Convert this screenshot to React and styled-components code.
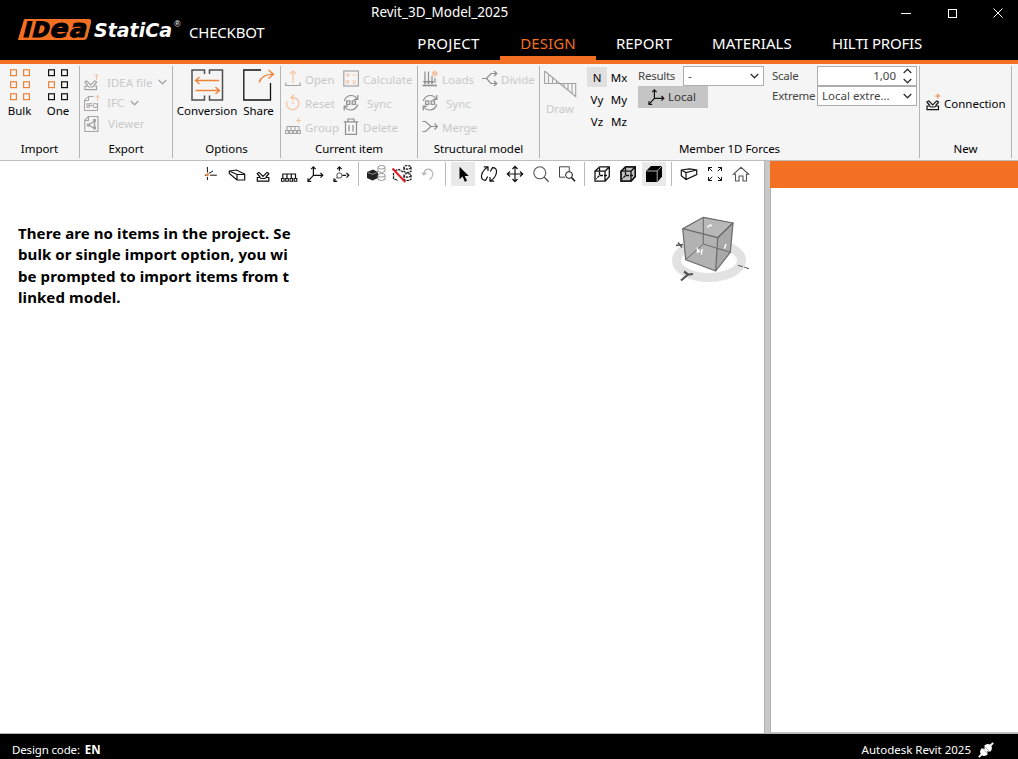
import React from "react";
import styled, { createGlobalStyle } from "styled-components";

const ORANGE = "#f36f21";
const FONT = `"Noto Sans", "Open Sans", sans-serif`;

const GlobalStyle = createGlobalStyle`
  * {
    box-sizing: border-box;
  }
  body {
    margin: 0;
    background: #fff;
    font-family: ${FONT};
    font-size: 11.5px;
    color: #000;
    overflow: hidden;
  }
  svg {
    display: block;
    flex: none;
  }
`;

const Window = styled.div`
  display: flex;
  flex-direction: column;
  width: 1018px;
  height: 759px;
  background: #fff;
`;

/* ---------- header ---------- */

const Header = styled.header`
  display: flex;
  height: 64px;
  background: #000;
  color: #fff;
  border-bottom: 4px solid ${ORANGE};
`;

const Brand = styled.div`
  display: flex;
  width: 371px;
  padding: 7px 0 0 16px;
`;

const Product = styled.span`
  margin-left: 5px;
  padding-top: 14px;
  font-size: 15px;
  line-height: 22px;
  letter-spacing: -0.2px;
`;

const HeaderMain = styled.div`
  display: flex;
  flex-direction: column;
  flex: 1;
`;

const TitleRow = styled.div`
  display: flex;
  justify-content: space-between;
  height: 26px;
`;

const Title = styled.span`
  font-size: 13.5px;
  line-height: 24px;
  letter-spacing: 0;
`;

const WindowButtons = styled.div`
  display: flex;
  margin-right: -3px;
`;

const WindowButton = styled.button`
  display: flex;
  align-items: center;
  justify-content: center;
  width: 46px;
  height: 26px;
  padding: 0;
  border: 0;
  background: none;
  color: #fff;
`;

const Tabs = styled.nav`
  display: flex;
  height: 34px;
  padding-left: 26px;
`;

const Tab = styled.a`
  width: ${({ $width }) => $width}px;
  height: 34px;
  font-size: 15px;
  line-height: 35px;
  text-align: center;
  white-space: nowrap;
  letter-spacing: ${({ $spacing }) => $spacing}px;
  color: ${({ $active }) => ($active ? ORANGE : "#fff")};
  border-bottom: ${({ $active }) => ($active ? `4px solid ${ORANGE}` : "0")};
`;

/* ---------- ribbon ---------- */

const Ribbon = styled.div`
  display: flex;
  height: 97px;
  padding-top: 2px;
  background: #f5f5f5;
  border-bottom: 1px solid #bdbdbd;
`;

const Group = styled.section`
  display: flex;
  flex-direction: column;
  width: ${({ $width }) => $width}px;
  height: 92px;
  border-right: 1px solid #b4b4b4;
`;

const GroupBody = styled.div`
  display: flex;
  height: 73px;
  padding: ${({ $pad }) => $pad || "0"};
`;

const GroupLabel = styled.div`
  height: 19px;
  line-height: 20px;
  text-align: center;
  letter-spacing: -0.05px;
`;

const BigButton = styled.button`
  display: flex;
  flex-direction: column;
  align-items: center;
  width: ${({ $width }) => $width}px;
  height: 56px;
  padding: 3px 0 0;
  border: 0;
  background: none;
  font: inherit;
  line-height: 20px;
  letter-spacing: -0.05px;
  white-space: nowrap;
  color: ${({ $off }) => ($off ? "#c9c9c9" : "#000")};
`;

const Column = styled.div`
  display: flex;
  flex-direction: column;
  width: ${({ $width }) => $width}px;
`;

const SmallButton = styled.button`
  display: flex;
  align-items: center;
  gap: ${({ $gap }) => $gap || 4}px;
  height: ${({ $height }) => $height || 24}px;
  padding: 0;
  border: 0;
  background: none;
  font: inherit;
  white-space: nowrap;
  color: ${({ $off }) => ($off ? "#c9c9c9" : "#000")};
`;

const ForceGrid = styled.div`
  display: grid;
  grid-template-columns: 20px 20px;
  grid-auto-rows: 20px;
  gap: 2px;
  width: 51px;
  padding-top: 1px;
`;

const ForceButton = styled.button`
  padding: 1px 0 0;
  border: 0;
  background: ${({ $active }) => ($active ? "#e0e0e0" : "none")};
  font: inherit;
  line-height: 20px;
  text-align: center;
  color: #000;
`;

const Field = styled.div`
  display: flex;
  align-items: center;
  height: 20px;
  line-height: 18px;
  color: #444;
`;

const FieldName = styled.label`
  width: 45px;
  padding-bottom: 1px;
  letter-spacing: -0.25px;
`;

const Box = styled.div`
  display: flex;
  align-items: center;
  justify-content: ${({ $end }) => ($end ? "flex-end" : "space-between")};
  gap: 7px;
  width: ${({ $width }) => $width}px;
  height: 20px;
  padding: 0 4px;
  background: #fff;
  border: 1px solid #adadad;
`;

const Spinner = styled.div`
  display: flex;
  flex-direction: column;
  gap: 4px;
`;

const LocalButton = styled.button`
  display: flex;
  align-items: center;
  gap: 2px;
  width: 70px;
  height: 22px;
  padding: 0 0 1px 8px;
  border: 0;
  background: #c5c5c5;
  font: inherit;
  color: #333;
`;

/* ---------- workspace ---------- */

const Workspace = styled.main`
  display: flex;
  height: 573px;
  border-bottom: 1px solid #b4b4b4;
`;

const Viewport = styled.div`
  display: flex;
  flex-direction: column;
  width: 764px;
`;

const Toolbar = styled.div`
  display: flex;
  height: 27px;
  padding: 1px 0 0 198px;
`;

const Tool = styled.button`
  display: flex;
  align-items: center;
  justify-content: center;
  width: 24px;
  height: 24px;
  margin: 0 1px;
  padding: 0;
  border: 0;
  background: ${({ $active }) => ($active ? "#e9e9e9" : "none")};
`;

const ToolDivider = styled.i`
  width: 1px;
  height: 24px;
  margin: 0 4px;
  background: #b9b9b9;
`;

const Scene = styled.div`
  display: flex;
  justify-content: space-between;
  padding: 20px 13px 0 18px;
`;

const Message = styled.p`
  width: 280px;
  margin: 15px 0 0;
  font-size: 15px;
  font-weight: 700;
  line-height: 21.3px;
  letter-spacing: 0.09px;
  white-space: pre;
  color: #000;
`;

const Splitter = styled.div`
  width: 6px;
  background: #c8c8c8;
  border-left: 1px solid #b5b5b5;
`;

const SidePanel = styled.aside`
  flex: 1;
  border-left: 1px solid #b0b0b0;
  border-bottom: 1px solid #c4c4c4;
`;

const PanelHeader = styled.div`
  height: 27px;
  margin-left: -1px;
  background: ${ORANGE};
`;

const StatusBar = styled.footer`
  display: flex;
  align-items: center;
  justify-content: space-between;
  height: 25px;
  padding: 6px 24px 0 12px;
  background: #000;
  color: #fff;
  line-height: 18px;
`;

const StatusItem = styled.div`
  display: flex;
  align-items: center;
  gap: ${({ $gap }) => $gap}px;
  letter-spacing: ${({ $spacing }) => $spacing || 0}px;
`;

/* ---------- drawings ---------- */

const Svg = ({ w = 20, h = 20, color = "#111", sw = 1, children }) => (
  <svg
    width={w}
    height={h}
    viewBox={`0 0 ${w} ${h}`}
    fill="none"
    stroke={color}
    strokeWidth={sw}
  >
    {children}
  </svg>
);

const GREY = "#a3a3a3";
const PALE = "#f6c4a4";
const ACCENT = "#ee8238";

const logoLetters = [
  { char: "I", x: 22, width: 8, size: 21 },
  { char: "D", x: 31, width: 17, size: 21 },
  { char: "e", x: 49, width: 18, size: 25 },
  { char: "a", x: 68.5, width: 17, size: 25 },
];

const Logo = () => (
  <svg width="168" height="44" viewBox="16 7 168 44">
    <path d="M24.5 19.5H89Q91.3 19.5 90.8 21.7L86.8 37.5Q86.2 39.5 84 39.5H18.5Z" fill={ORANGE} stroke={ORANGE} />
    <g transform="translate(9.2 0) skewX(-14)" fill="#000" stroke="#000" strokeWidth="1.2" fontFamily="DejaVu Sans" fontWeight="700">
      {logoLetters.map(({ char, x, width, size }) => (
        <text key={char} x={x} y="37.2" fontSize={size} textLength={width} lengthAdjust="spacingAndGlyphs">
          {char}
        </text>
      ))}
    </g>
    <text x="94" y="37.2" fill="#fff" fontFamily="DejaVu Sans" fontWeight="700" fontStyle="italic" fontSize="20" textLength="78" lengthAdjust="spacingAndGlyphs">StatiCa</text>
    <text x="174.3" y="27" fill="#fff" fontFamily="Liberation Sans" fontSize="8.5">®</text>
  </svg>
);

const SquaresIcon = ({ single }) => (
  <Svg w={20} h={32} color={single ? "#111" : ACCENT} sw={1.2}>
    {[0, 12, 24].map((y) =>
      [0, 13].map((x) => (
        <rect
          key={`${x}-${y}`}
          x={x + 0.6}
          y={y + 0.8}
          width="5.8"
          height="5.8"
          stroke={single && x === 0 && y === 12 ? ACCENT : undefined}
        />
      ))
    )}
  </Svg>
);

const Chevron = ({ color = GREY, up }) => (
  <Svg w={9} h={6} color={color} sw={1.3}>
    <path d={up ? "M.7 5L4.5 1.2L8.3 5" : "M.7 1L4.5 4.8L8.3 1"} />
  </Svg>
);

const Joint = ({ color = "#111" }) => (
  <g stroke={color} strokeWidth="1.2">
    <path d="M1 11.5V15.2H12.5V11.5H10L8.5 12.5H5L3.5 11.5Z" />
    <path d="M.8 7.5L3.8 11M2.8 6.3L6.7 10.3L10.7 6.3M12.7 7.5L9.7 11M.5 7.8L3 6.2M13 7.8L10.5 6.2" />
  </g>
);

const IdeaFileIcon = () => (
  <Svg w={17} color={GREY}>
    <g transform="translate(0 2.5)">
      <Joint color={GREY} />
    </g>
    <path d="M12.5 8V2.5M10.5 4.5L12.5 2.2L14.5 4.5" stroke={PALE} />
  </Svg>
);

const IfcIcon = () => (
  <Svg w={17} color={GREY}>
    <path d="M9.5 3.5H4.5L.5 7V17.5H13.5V10M.5 7.5H4.5V3.5" />
    <path d="M13.5 8V2.5M11.5 4.5L13.5 2.2L15.5 4.5" stroke={PALE} />
    <text x="2" y="15" fontFamily="Liberation Sans" fontWeight="700" fontSize="7" fill={GREY} stroke="none">IFC</text>
  </Svg>
);

const ViewerIcon = () => (
  <Svg w={17} color={GREY} sw={1.1}>
    <path d="M4.5 2.5H14V17.5H.8V6ZM.8 6.5H4.5V2.5" />
    <path d="M10.5 6.5V14M4.5 11L10.5 7M4.5 11L10.5 14.5" strokeWidth="1.4" />
    <path d="M9.5 5.5H11.5V7.5H9.5ZM3.5 10H5.5V12H3.5ZM9.5 13H11.5V15H9.5Z" fill={GREY} />
  </Svg>
);

const ConversionIcon = () => (
  <Svg w={33} h={32} color="#4f4f4f" sw={1.5}>
    <path d="M13.5 5V1H1V31H13.5V26.5M18.5 5V1H31.5V31H18.5V26.5" />
    <path d="M28 11.5H5M8.5 8L4.5 11.5L8.5 15M4.5 21.5H28M24.5 18L28.5 21.5L24.5 25" stroke={ACCENT} strokeWidth="1.3" />
  </Svg>
);

const ShareIcon = () => (
  <Svg w={32} h={32} color="#111" sw={1.3}>
    <path d="M18 1H.8V31H27.5V14" />
    <path d="M16 13.5Q19 5.5 30 5.2M25.5 1L30.5 5.2L25.5 9.5" stroke={ACCENT} />
  </Svg>
);

const OpenIcon = () => (
  <Svg w={16} color={GREY} sw={1.2}>
    <path d="M.8 13.5V16.5H15.2V13.5" />
    <path d="M8 14V2M5 5L8 1.8L11 5" stroke={PALE} />
  </Svg>
);

const ResetIcon = () => (
  <Svg w={16} color={PALE} sw={1.3}>
    <path d="M1.8 8.5A6.2 6.2 0 1 0 7 4.3M9 1.5L6 4.4L9 7.2" />
    <circle cx="8" cy="10" r="1" fill={PALE} stroke="none" />
  </Svg>
);

const GroupIcon = () => (
  <Svg w={16} color={GREY} sw={1.1}>
    <path d="M2 14V9.5H14V14M6 14V9.5M10 14V9.5" />
    <path d="M.6 13.5H3.4V16.5H.6ZM4.6 13.5H7.4V16.5H4.6ZM8.6 13.5H11.4V16.5H8.6ZM12.6 13.5H15.4V16.5H12.6Z" />
    <path d="M13.5 1V6M11 3.5H16" stroke={PALE} />
  </Svg>
);

const CalculateIcon = () => (
  <Svg w={16} color={GREY} sw={1.2}>
    <rect x=".8" y="2" width="14.6" height="15" />
    <path d="M2.5 6H7M4.8 4V8M9.5 6H13M3 11.5L6 14.5M6 11.5L3 14.5M9.5 12H13M9.5 14.2H13" stroke={PALE} />
  </Svg>
);

const SyncIcon = () => (
  <Svg w={16} color="#8e8e8e" sw={1.2}>
    <path d="M1.3 8Q3 2.5 8.5 2.5Q12 2.5 14.3 6M14.8 2V6.3H10.8M14.8 11.5Q13 17 7.5 17Q4 17 1.7 13.5M1.2 17.5V13.2H5.2" />
    <rect x="3.6" y="8" width="3.3" height="3.3" />
    <rect x="9.2" y="8" width="3.3" height="3.3" />
  </Svg>
);

const TrashIcon = () => (
  <Svg w={16} color="#8e8e8e" sw={1.2}>
    <path d="M.8 4.8H15.2M5 4.5V2H11V4.5M2.5 5V17.3H13.5V5M6 8V14.5M10 8V14.5" />
  </Svg>
);

const LoadsIcon = () => (
  <Svg w={16} color="#8e8e8e" sw={1.2}>
    <path d="M.5 16.5H15" strokeWidth="1.6" />
    <path d="M3 2.5V14M6.5 2.5V14M10 7V14M13 9V14M1.5 12L3 14.5L4.5 12M5 12L6.5 14.5L8 12M8.5 12L10 14.5L11.5 12" />
    <circle cx="12.7" cy="4.5" r="2.5" fill={PALE} stroke={PALE} strokeDasharray="1 1" />
  </Svg>
);

const MergeIcon = () => (
  <Svg w={16} color="#8e8e8e" sw={1.2}>
    <path d="M.5 4.5H3.5L9 9.5L3.5 14.5H.5M9 9.5H15.5M12.5 6.5L15.5 9.5L12.5 12.5" />
  </Svg>
);

const DivideIcon = () => (
  <Svg w={16} color="#8e8e8e" sw={1.2}>
    <path d="M0 9.5H4.5L9 4.5H14.5M4.5 9.5L9 14.5H14.5M12 2L14.8 4.5L12 7M12 12L14.8 14.5L12 17" />
  </Svg>
);

const DrawIcon = () => (
  <Svg w={33} h={30} color={GREY} sw={1.1}>
    <path d="M.6 2V14.5H31.7V27.5L.6 2M4.5 5.5V14.5M8.5 9V14.5M12.5 12V14.5M20 15V17.5M24 15V21M28 15V24" />
  </Svg>
);

const AxesPaths = ({ dashed }) => (
  <g stroke="#111" strokeWidth="1.2">
    <path strokeDasharray={dashed ? "4 1.5" : "none"} d="M8.4 3V11.3H17.5M8.4 11.3L3 17.2" />
    <path d="M6.2 5.2L8.4 2.8L10.6 5.2M15.5 9L17.8 11.3L15.5 13.6M3 14.2V17.3H6.2" />
    {dashed && <circle cx="8.4" cy="11.5" r="2.5" fill="#fff" stroke="#777" />}
  </g>
);

const ConnectionIcon = () => (
  <Svg w={16}>
    <g transform="translate(0 1.5)">
      <Joint />
    </g>
    <path d="M11.8 .5V5.5M9.3 3H14.3" stroke={ACCENT} />
  </Svg>
);

const cubeEdges = "M3 7.2H13V17.2H3ZM3 7.2L7.5 2.8H17.3V12.5L13 17.2M13 7.2L17.3 2.8";

const toolIcons = {
  point: (
    <>
      <path d="M6.4 3V8.5M9 11.2H15.8M6.4 13V16M7.8 9.4L12 7M3.8 11.2H5" />
      <circle cx="6.4" cy="10.8" r="1.1" fill={ACCENT} stroke={ACCENT} />
    </>
  ),
  beam: <path d="M2.3 7L9.5 6L17.7 10V16H10L2.3 9.5ZM2.3 7L10 10.5H17.7M10 10.5V16" strokeWidth="1.2" />,
  joint: (
    <g transform="translate(3.3 2)">
      <Joint />
    </g>
  ),
  members: (
    <>
      <path d="M3.8 15V10H16.5V15M8 15V10M12.3 15V10" strokeWidth="1.2" />
      <path d="M2.5 14.5H5.1V17.3H2.5ZM6.7 14.5H9.3V17.3H6.7ZM11 14.5H13.6V17.3H11ZM15.2 14.5H17.8V17.3H15.2Z" strokeWidth="1.1" />
    </>
  ),
  axes: <AxesPaths />,
  axesDashed: <AxesPaths dashed />,
  solids: (
    <>
      <path d="M1 8L7 5.5L12 8V14L6.5 16.5L1 14Z" fill="#222" stroke="none" />
      <path d="M1.5 8.5L6.5 10.3L11.5 8.3" stroke="#aaa" strokeWidth=".8" />
      <g stroke="#999">
        <path d="M12 3.5V7.5Q15.5 9.5 19 7.5V3.5M12 11.5V15.5Q15.5 17.5 19 15.5V11.5" />
        <ellipse cx="15.5" cy="3.3" rx="3.5" ry="1.8" />
        <ellipse cx="15.5" cy="11.3" rx="3.5" ry="1.8" />
      </g>
    </>
  ),
  hidden: (
    <>
      <g stroke="#111" strokeWidth="1.2" strokeDasharray="2.5 .8">
        <path d="M12 3.5V7.5Q15.5 9.5 19 7.5V3.5M12 11.5V15.5Q15.5 17.5 19 15.5V11.5M1.5 9V14.5L6 16.5M3 6.5L7 5.5L11 8" />
        <ellipse cx="15.5" cy="3.3" rx="3.5" ry="1.8" />
        <ellipse cx="15.5" cy="11.3" rx="3.5" ry="1.8" />
      </g>
      <path d="M.5 4.5L13.3 18" stroke="#e31d24" strokeWidth="2" />
    </>
  ),
  undo: <path d="M11.5 15.5Q15.2 13 14.7 9.2Q13.5 5 9.8 5.2Q6 5.8 5.8 10.5M3.8 8.5L5.8 11L8.3 8.8" stroke="#b5b5b5" strokeWidth="1.2" />,
  cursor: <path d="M6.5 2.8V15.3L9.6 12.6L11.8 17.8L14 16.8L11.7 11.9H15.8Z" fill="#000" stroke="none" />,
  orbit: (
    <path d="M8.7 12.5L6.5 16.3Q2 16.3 2.5 11.5Q3.5 6 8.7 3.2M4.8 2.8H9V7M11.3 7.5L13.5 3.7Q18 3.7 17.5 8.5Q16.5 14 11.3 16.8M15.2 17.2H11V13" strokeWidth="1.2" />
  ),
  pan: <path d="M10 2.5V17.5M2.5 10H17.5M7.5 5L10 2.3L12.5 5M7.5 15L10 17.7L12.5 15M5 7.5L2.3 10L5 12.5M15 7.5L17.7 10L15 12.5" strokeWidth="1.2" />,
  zoom: (
    <>
      <circle cx="8.8" cy="8.8" r="6" stroke="#555" strokeWidth="1.1" />
      <path d="M13.2 13.2L17.7 17.8" stroke="#555" strokeWidth="1.3" />
    </>
  ),
  zoomArea: (
    <>
      <path d="M8 13.2H2.5V2.8H12.3V7" stroke="#444" />
      <circle cx="12" cy="11" r="3.4" />
      <path d="M14.5 13.5L18 17.3" strokeWidth="1.5" />
    </>
  ),
  wire: (
    <g strokeWidth="1.3">
      <path d={cubeEdges} />
      <path d="M7.5 4V11.5H16M7.5 11.5L4 15" strokeDasharray="3 1" />
    </g>
  ),
  wireShaded: (
    <g strokeWidth="1.3">
      <path d="M3 7.2L7.5 2.8H17.3V12.5L13 17.2H3Z" fill="#c4c4c4" />
      <path d={cubeEdges} />
      <path d="M7.5 4V11.5H16M7.5 11.5L4 15" strokeDasharray="3 1" />
    </g>
  ),
  solid: (
    <>
      <path d="M2 7L7 2H18V12.5L13.5 18H2Z" fill="#000" stroke="none" />
      <path d="M2.5 7H13.2L17.7 2.3M13.2 7V17.8" stroke="#ddd" strokeWidth=".8" />
    </>
  ),
  perspective: <path d="M2.3 6L10.5 4.8L17.7 6V10.5L7 15.5L2.3 11.8ZM2.3 6L7 8.5L17.7 6M7 8.5V15.5" strokeWidth="1.2" />,
  fit: <path d="M3.5 7V3.5H7M3.5 3.5L7.2 7.2M13 3.5H16.5V7M16.5 3.5L12.8 7.2M3.5 13V16.5H7M3.5 16.5L7.2 12.8M13 16.5H16.5V13M16.5 16.5L12.8 12.8" />,
  home: <path d="M2.3 10.3L10 3.3L17.7 10.3H15.5V17H12V12H8V17H4.5V10.3Z" stroke="#555" strokeWidth="1.1" />,
};

const ViewCube = () => (
  <svg width="82" height="80" viewBox="669 208 82 80">
    <ellipse cx="709" cy="260.5" rx="32.5" ry="17" fill="none" stroke="#e2e2e2" strokeWidth="9" />
    <path d="M682.7 228.7L703.3 217.3L733 223L730.3 252.3L715.7 271L685.7 259.7Z" fill="#b2b2b2" />
    <g stroke="#6a6a6a" strokeWidth="1.2" strokeLinejoin="round" fill="none">
      <path d="M682.7 228.7L703.3 217.3L733 223L717.7 237.7Z" fill="#b8b8b8" />
      <path d="M717.7 237.7L733 223L730.3 252.3L715.7 271Z" fill="#a9a9a9" />
      <path d="M682.7 228.7L685.7 259.7L715.7 271" />
      <path d="M703.3 217.3V244L685.7 259.7M703.3 244L730.3 252.3" strokeWidth="1" />
    </g>
    <path d="M707 227.3L710 225.2L712 225.5M697.5 253V249L699.5 252M701.5 254.5V250.5L703 249.5M724.5 248.5L726 244" fill="none" stroke="#fff" strokeWidth="1.4" />
    <g stroke="#555" fill="none">
      <path d="M681 280.5L688 274.5M684 271.5L688 274.5L693 274" strokeWidth="2.2" />
      <path d="M676 245.5L683 244.5M678 242.5L682 247.5" strokeWidth="1.5" />
      <path d="M738 265.3L749 268.7" strokeDasharray="5 1.5" />
    </g>
  </svg>
);

const PlugIcon = () => (
  <svg width="16" height="16" viewBox="0 0 16 16">
    <path d="M.8 15.2L4 12M12 4L15.2 .8" stroke="#fff" strokeWidth="1.8" />
    <path d="M4 6L10 12Q6.5 15.5 3.3 12.7Q.5 9.5 4 6ZM6 4L12 10Q15.5 6.5 12.7 3.3Q9.5 .5 6 4Z" fill="#fff" />
    <path d="M5 7L7 5L11 9L9 11Z" fill="#fff" />
    <path d="M5 5.2L7 7.2M9 9.2L10.8 11" stroke="#000" strokeWidth=".7" />
  </svg>
);

/* ---------- parts ---------- */

const tabs = [
  { name: "PROJECT", width: 103, spacing: 0.3 },
  { name: "DESIGN", width: 96, spacing: 0.1, active: true },
  { name: "REPORT", width: 96, spacing: 0 },
  { name: "MATERIALS", width: 120, spacing: 0.1 },
  { name: "HILTI PROFIS", width: 130, spacing: -0.2 },
];

const tools = [
  "point", "beam", "joint", "members", "axes", "axesDashed", "|",
  "solids", "hidden", "undo", "|",
  "cursor", "orbit", "pan", "zoom", "zoomArea", "|",
  "wire", "wireShaded", "solid", "|",
  "perspective", "fit", "home",
];

const activeTools = ["cursor", "solid"];

const forces = ["N", "Mx", "Vy", "My", "Vz", "Mz"];

const RibbonGroup = ({ label, width, pad, children }) => (
  <Group $width={width}>
    <GroupBody $pad={pad}>{children}</GroupBody>
    <GroupLabel>{label}</GroupLabel>
  </Group>
);

const AppHeader = () => (
  <Header>
    <Brand>
      <Logo />
      <Product>CHECKBOT</Product>
    </Brand>
    <HeaderMain>
      <TitleRow>
        <Title>Revit_3D_Model_2025</Title>
        <WindowButtons>
          <WindowButton>
            <Svg w={10} h={10} color="#fff"><path d="M0 5.5H10" /></Svg>
          </WindowButton>
          <WindowButton>
            <Svg w={10} h={10} color="#fff"><rect x="1.5" y="1.5" width="8" height="8" /></Svg>
          </WindowButton>
          <WindowButton>
            <Svg w={10} h={10} color="#fff"><path d="M.5 .5L9.5 9.5M9.5 .5L.5 9.5" /></Svg>
          </WindowButton>
        </WindowButtons>
      </TitleRow>
      <Tabs>
        {tabs.map((tab) => (
          <Tab key={tab.name} $width={tab.width} $spacing={tab.spacing} $active={tab.active}>
            {tab.name}
          </Tab>
        ))}
      </Tabs>
    </HeaderMain>
  </Header>
);

const AppRibbon = () => (
  <Ribbon>
    <RibbonGroup label="Import" width={80}>
      <BigButton $width={39}><SquaresIcon />Bulk</BigButton>
      <BigButton $width={38}><SquaresIcon single />One</BigButton>
    </RibbonGroup>
    <RibbonGroup label="Export" width={93} pad="6px 0 0 4px">
      <Column $width={88}>
        <SmallButton $off $height={20} $gap={6}><IdeaFileIcon />IDEA file<Chevron /></SmallButton>
        <SmallButton $off $height={21} $gap={6}><IfcIcon />IFC<Chevron /></SmallButton>
        <SmallButton $off $height={21} $gap={7}><ViewerIcon />Viewer</SmallButton>
      </Column>
    </RibbonGroup>
    <RibbonGroup label="Options" width={108} pad="0 0 0 3px">
      <BigButton $width={62}><ConversionIcon />Conversion</BigButton>
      <BigButton $width={41}><ShareIcon />Share</BigButton>
    </RibbonGroup>
    <RibbonGroup label="Current item" width={137} pad="1px 0 0 4px">
      <Column $width={58}>
        <SmallButton $off><OpenIcon />Open</SmallButton>
        <SmallButton $off><ResetIcon />Reset</SmallButton>
        <SmallButton $off><GroupIcon />Group</SmallButton>
      </Column>
      <Column $width={72}>
        <SmallButton $off><CalculateIcon />Calculate</SmallButton>
        <SmallButton $off $gap={8}><SyncIcon />Sync</SmallButton>
        <SmallButton $off><TrashIcon />Delete</SmallButton>
      </Column>
    </RibbonGroup>
    <RibbonGroup label="Structural model" width={122} pad="1px 0 0 4px">
      <Column $width={60}>
        <SmallButton $off><LoadsIcon />Loads</SmallButton>
        <SmallButton $off $gap={8}><SyncIcon />Sync</SmallButton>
        <SmallButton $off><MergeIcon />Merge</SmallButton>
      </Column>
      <Column $width={56}>
        <SmallButton $off $gap={3}><DivideIcon />Divide</SmallButton>
      </Column>
    </RibbonGroup>
    <RibbonGroup label="Member 1D Forces" width={380} pad="0 0 0 3px">
      <BigButton $width={34} $off><DrawIcon />Draw</BigButton>
      <Column $width={10} />
      <ForceGrid>
        {forces.map((force) => (
          <ForceButton key={force} $active={force === "N"}>{force}</ForceButton>
        ))}
      </ForceGrid>
      <Column $width={134}>
        <Field>
          <FieldName>Results</FieldName>
          <Box $width={81}>
            <span>-</span>
            <Chevron color="#333" />
          </Box>
        </Field>
        <LocalButton>
          <Svg><AxesPaths /></Svg>
          Local
        </LocalButton>
      </Column>
      <Column $width={145}>
        <Field>
          <FieldName>Scale</FieldName>
          <Box $width={100} $end>
            <span>1,00</span>
            <Spinner>
              <Chevron color="#333" up />
              <Chevron color="#333" />
            </Spinner>
          </Box>
        </Field>
        <Field>
          <FieldName>Extreme</FieldName>
          <Box $width={100}>
            <span>Local extre...</span>
            <Chevron color="#333" />
          </Box>
        </Field>
      </Column>
    </RibbonGroup>
    <RibbonGroup label="New" width={92} pad="25px 0 0 6px">
      <SmallButton $gap={2}><ConnectionIcon />Connection</SmallButton>
    </RibbonGroup>
  </Ribbon>
);

const AppToolbar = () => (
  <Toolbar>
    {tools.map((tool, i) =>
      tool === "|" ? (
        <ToolDivider key={i} />
      ) : (
        <Tool key={tool} $active={activeTools.includes(tool)}>
          <Svg>{toolIcons[tool]}</Svg>
        </Tool>
      )
    )}
  </Toolbar>
);

const emptyText = [
  "There are no items in the project. Se",
  "bulk or single import option, you wi",
  "be prompted to import items from t",
  "linked model.",
].join("\n");

const App = () => (
  <>
    <GlobalStyle />
    <Window>
      <AppHeader />
      <AppRibbon />
      <Workspace>
        <Viewport>
          <AppToolbar />
          <Scene>
            <Message>{emptyText}</Message>
            <ViewCube />
          </Scene>
        </Viewport>
        <Splitter />
        <SidePanel>
          <PanelHeader />
        </SidePanel>
      </Workspace>
      <StatusBar>
        <StatusItem $gap={5} $spacing={-0.15}>
          <span>Design code:</span>
          <b>EN</b>
        </StatusItem>
        <StatusItem $gap={7}>
          Autodesk Revit 2025
          <PlugIcon />
        </StatusItem>
      </StatusBar>
    </Window>
  </>
);

export default App;
